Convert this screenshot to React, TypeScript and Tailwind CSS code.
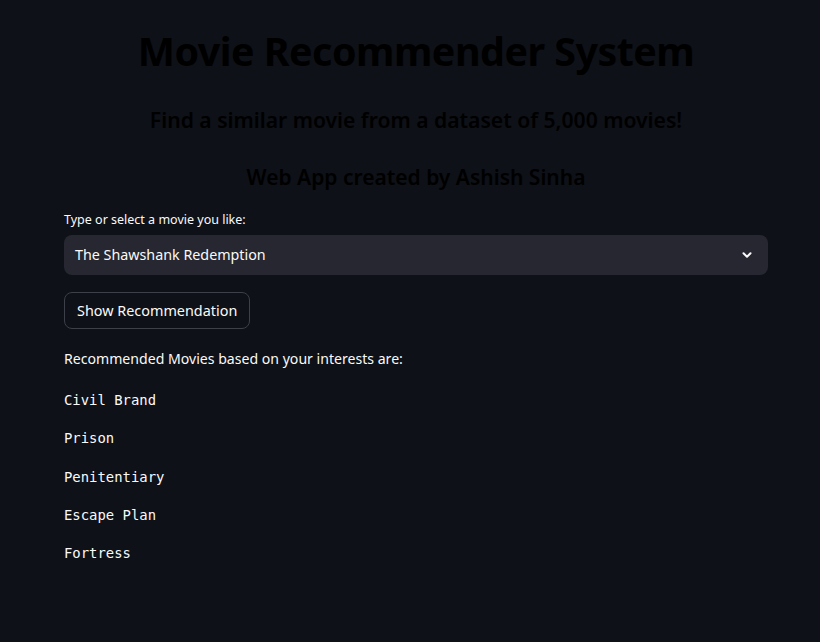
import React from "react";

const movies = ["Civil Brand", "Prison", "Penitentiary", "Escape Plan", "Fortress"];

export default function App() {
  return (
    <div className="min-h-[642px] w-full bg-[#0e1117] text-[#fafafa]" style={{ fontFamily: '"Noto Sans", sans-serif' }}>
      <div className="ml-[64px] w-[704px] pt-[25px]">
        <h1 className="text-center text-[39.4px] leading-[52px] font-bold text-black tracking-[-0.5px]">Movie Recommender System</h1>
        <h3 className="mt-[28px] text-center text-[21.1px] leading-[30px] font-semibold text-black">Find a similar movie from a dataset of 5,000 movies!</h3>
        <h3 className="mt-[27px] text-center text-[21px] leading-[30px] font-semibold text-black">Web App created by Ashish Sinha</h3>
        <div className="mt-[18px] text-[12.5px] leading-[20px]">Type or select a movie you like:</div>
        <div className="mt-[5px] flex h-[40px] items-center justify-between rounded-[8px] bg-[#262730] pl-[11px] pr-[14px] text-[14.3px]">
          <span>The Shawshank Redemption</span>
          <svg width="14" height="14" viewBox="0 0 24 24" fill="none" stroke="#fafafa" strokeWidth="3.5" strokeLinecap="round" strokeLinejoin="round"><path d="M6 9l6 6 6-6" /></svg>
        </div>
        <button className="mt-[17px] h-[37px] rounded-[8px] border border-[#3d3f49] bg-[#0e1117] px-[12px] text-[14.4px] text-[#fafafa]">Show Recommendation</button>
        <div className="mt-[18px] text-[14.1px] leading-[24px]">Recommended Movies based on your interests are:</div>
        <div className="mt-[17px] flex flex-col gap-[14.3px]" style={{ fontFamily: '"DejaVu Sans Mono", monospace' }}>
          {movies.map((m) => (
            <div key={m} className="text-[13.9px] leading-[24px]">{m}</div>
          ))}
        </div>
      </div>
    </div>
  );
}
